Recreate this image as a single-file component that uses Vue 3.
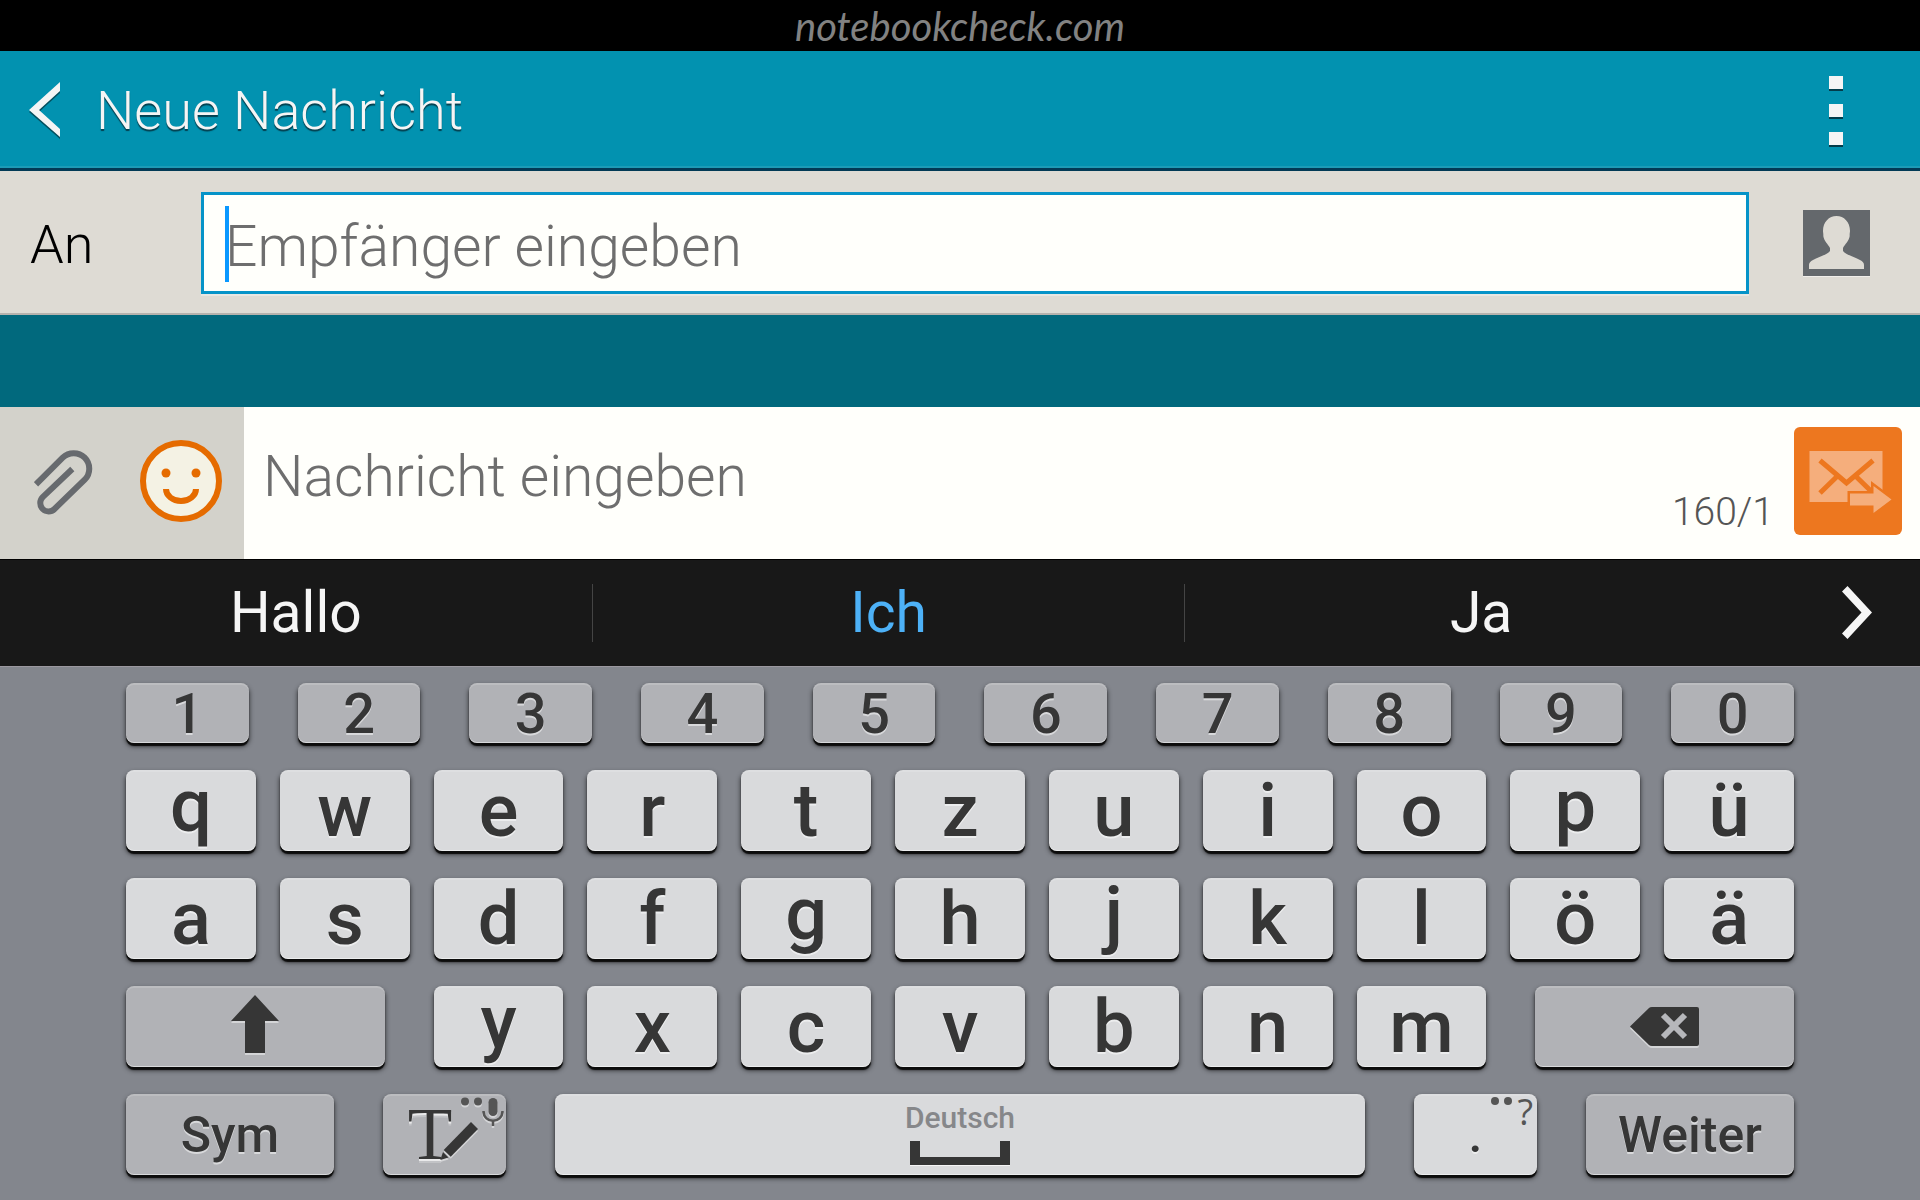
<template>
  <div class="screen">
    <div class="brand-bar">notebookcheck.com</div>

    <header class="title-bar">
      <button type="button" class="plain-btn" aria-label="Zurück">
        <svg class="back-icon" width="31" height="58" viewBox="0 0 31 58">
          <path d="M0 28 31 0v9L10 28l21 19v8z" fill="#f5f5f5" />
        </svg>
      </button>
      <h1>Neue Nachricht</h1>
      <button type="button" class="plain-btn menu-btn" aria-label="Menü">
        <span class="dot"></span>
        <span class="dot"></span>
        <span class="dot"></span>
      </button>
    </header>

    <div class="recipient-row">
      <label for="recipient">An</label>
      <div class="recipient-field">
        <span class="caret"></span>
        <input id="recipient" v-model="recipient" type="text" placeholder="Empfänger eingeben" />
      </div>
      <button type="button" class="plain-btn contact-btn" aria-label="Kontakte">
        <svg width="67" height="67" viewBox="0 0 67 67">
          <rect y="1" width="67" height="66" fill="#f0eeea" />
          <rect width="67" height="66" fill="#64686c" />
          <path
            d="M33.500 6C41 6 47 12 47 21c0 1-.5 3-.3 5C46 31 42 34 40 38v3c3 4 12 6 17 9q4 2 4 5v4H6v-4q0-3 4-5c5-3 14-5 17-9v-3c-2-4-6-7-6.700-12c.2-2-.3-4-.3-5C20 12 26 6 33.500 6z"
            fill="#dedbd4"
          />
        </svg>
      </button>
    </div>

    <div class="conversation"></div>

    <div class="compose-row">
      <div class="tools">
        <button type="button" class="plain-btn" aria-label="Anhang">
          <svg width="60" height="68" viewBox="35 40 60 68">
            <path
              d="M37 76.300 63.700 49.700A15.500 15.500 0 0 1 85.700 71.700L55.500 101A8.300 8.300 0 0 1 43.700 89.200L73.300 61"
              fill="none"
              stroke="#676a6e"
              stroke-width="6"
            />
          </svg>
        </button>
        <button type="button" class="plain-btn" aria-label="Emoticons">
          <svg width="84" height="84" viewBox="0 0 84 84">
            <circle cx="42" cy="41" r="38" fill="#f4f2e4" stroke="#e56b00" stroke-width="6" />
            <circle cx="27" cy="33" r="4.500" fill="#e56b00" />
            <circle cx="57" cy="33" r="4.500" fill="#e56b00" />
            <path d="M27 49a15 12 0 0 0 30 0" fill="none" stroke="#e56b00" stroke-width="6" />
          </svg>
        </button>
      </div>
      <textarea v-model="message" rows="1" placeholder="Nachricht eingeben" aria-label="Nachricht"></textarea>
      <span class="counter">160/1</span>
      <button type="button" class="send-btn" aria-label="Senden">
        <svg width="108" height="108" viewBox="0 0 108 108">
          <path d="M15.500 24h73v51h-73z" fill="#f5ae7c" />
          <g fill="none" stroke="#ed771f" stroke-width="5">
            <path d="M26 33.500 52.500 56 79 33.500" />
            <path d="M43.500 49 26 66M61.500 49 79 66" />
          </g>
          <path
            d="M56 66.500h23.500V59l18 13.500-18 13.500v-7.500H56z"
            fill="#f5ae7c"
            stroke="#ed771f"
            stroke-width="5"
            paint-order="stroke"
          />
        </svg>
      </button>
    </div>

    <div class="suggestions">
      <button
        v-for="word in suggestions"
        :key="word"
        type="button"
        class="suggestion"
        :class="{ active: word === activeWord }"
      >
        {{ word }}
      </button>
      <button type="button" class="more-btn" aria-label="Mehr">
        <svg width="31" height="54" viewBox="0 0 31 54">
          <path d="M0 5.500 5.500 0 30 26.500 5.500 53 0 47.500l19.500-21z" fill="#f5f5f5" />
        </svg>
      </button>
    </div>

    <div class="keyboard">
      <div class="key-row digits">
        <button v-for="n in digits" :key="n" type="button" class="key dark digit">{{ n }}</button>
      </div>

      <div v-for="(row, i) in letterRows" :key="i" class="key-row letters">
        <button
          v-for="letter in row"
          :key="letter"
          type="button"
          class="key letter"
          :class="{ descender: hasDescender(letter) }"
        >
          {{ letter }}
        </button>
      </div>

      <div class="key-row shift-row">
        <button type="button" class="key dark side" aria-label="Umschalt">
          <svg class="embossed" width="48" height="63" viewBox="0 0 48 63">
            <path d="M24 0 48 26H34v32H14V26H0z" fill="#363636" />
          </svg>
        </button>
        <div class="key-group">
          <button
            v-for="letter in lastLetters"
            :key="letter"
            type="button"
            class="key letter"
            :class="{ descender: hasDescender(letter) }"
          >
            {{ letter }}
          </button>
        </div>
        <button type="button" class="key dark side" aria-label="Löschen">
          <svg class="embossed" width="69" height="39" viewBox="0 0 69 39">
            <path d="M0 19.500 19 1q1-1 3-1h45q2 0 2 2v35q0 2-2 2H22q-2 0-3-1z" fill="#363636" />
            <path d="m33 8 22 22m0-22-22 22" fill="none" stroke="#b6b7bb" stroke-width="6" />
          </svg>
        </button>
      </div>

      <div class="key-row bottom-row">
        <button type="button" class="key dark word">Sym</button>
        <button type="button" class="key dark" aria-label="Eingabemodus">
          <svg class="embossed" width="122" height="81" viewBox="0 0 122 81">
            <text x="46" y="65" class="serif-t">T</text>
            <path d="m87 28 7 7-27.300 27.700-7-6.700z" fill="#363636" />
            <path d="m59 58 5.500 5.500-8.200 2.500z" fill="#363636" />
            <g fill="#555">
              <circle cx="81" cy="7.500" r="4" />
              <circle cx="94" cy="7.500" r="4" />
              <rect x="104.500" y="4" width="9" height="18" rx="4.500" />
            </g>
            <path d="M99.500 17c0 13 19 13 19 0M109 26.500V32" fill="none" stroke="#555" stroke-width="2.500" />
          </svg>
        </button>
        <button type="button" class="key space">
          <span class="language">Deutsch</span>
          <span class="space-mark"></span>
        </button>
        <button type="button" class="key word">
          .
          <span class="hint"><i></i><i></i>?</span>
        </button>
        <button type="button" class="key dark word">Weiter</button>
      </div>
    </div>
  </div>
</template>

<script setup>
import { ref } from 'vue';

const recipient = ref('');
const message = ref('');

const suggestions = ['Hallo', 'Ich', 'Ja'];
const activeWord = 'Ich';

const digits = [...'1234567890'];
const letterRows = [[...'qwertzuiopü'], [...'asdfghjklöä']];
const lastLetters = [...'yxcvbnm'];

// letters with a descender sit a little higher on their key
const hasDescender = (letter) => 'qypgj'.includes(letter);
</script>

<style>
body {
  margin: 0;
  background: #83868d;
}
</style>

<style scoped>
.screen {
  display: flex;
  flex-direction: column;
  min-height: 100vh;
  font-family: Roboto, 'Liberation Sans', sans-serif;
  color: #363636;
}
.screen *,
.screen {
  box-sizing: border-box;
}
button,
input,
textarea {
  font-family: inherit;
  border: none;
  outline: none;
  margin: 0;
  padding: 0;
}
button {
  cursor: pointer;
}
svg {
  display: block;
}
.plain-btn {
  background: none;
}

/* top */
.brand-bar {
  height: 51px;
  background: #000;
  color: #828282;
  font-family: 'Segoe Script', Lato, sans-serif;
  font-style: italic;
  font-size: 40px;
  line-height: 52px;
  text-align: center;
}
.title-bar {
  display: flex;
  align-items: center;
  height: 120px;
  padding: 2px 77px 0 29px;
  background: #0292b0;
  border-bottom: 3px solid #023a55;
  box-shadow: inset 0 -2px #1c9bb6;
}
.back-icon {
  filter: drop-shadow(0 2px 0 #04505f);
}
h1 {
  flex: 1;
  margin: 0 0 0 36px;
  font-size: 54px;
  line-height: 64px;
  font-weight: 340;
  color: #f5f5f5;
  text-shadow: 0 2px 1px #04404f;
}
.menu-btn {
  display: flex;
  flex-direction: column;
  gap: 15px;
}
.dot {
  width: 14px;
  height: 13px;
  background: #f5f5f5;
  box-shadow: 0 2px #033c4a;
}

/* recipient */
.recipient-row {
  display: flex;
  align-items: center;
  height: 144px;
  padding: 2px 50px 0 30px;
  background: #dedbd4;
  border-bottom: 2px solid #b5b2ad;
}
.recipient-row label {
  width: 171px;
  padding-top: 4px;
  font-size: 54px;
  line-height: 64px;
  font-weight: 340;
  color: #000;
}
.recipient-field {
  display: flex;
  flex: 1;
  align-items: center;
  height: 102px;
  padding: 2px 0 0 21px;
  background: #fffffb;
  border: 3px solid #0593c8;
  box-shadow: 0 2px #e8e7e3;
}
.caret {
  width: 4px;
  height: 76px;
  margin-right: -4px;
  background: #0a98ff;
}
.recipient-field input {
  flex: 1;
  min-width: 0;
  padding-top: 6px;
  background: none;
  caret-color: #0a98ff;
}
input,
textarea {
  font-size: 57px;
  line-height: 68px;
  font-weight: 340;
  color: #000;
}
input::placeholder,
textarea::placeholder {
  color: #6e6e6e;
  opacity: 1;
}
.contact-btn {
  margin-left: 54px;
}

.conversation {
  height: 92px;
  background: #01697d;
}

/* compose */
.compose-row {
  display: flex;
  height: 152px;
  background: #fffffb;
}
.tools {
  display: flex;
  align-items: center;
  gap: 45px;
  width: 244px;
  padding: 0 0 2px 34px;
  background: #d3d2cb;
}
textarea {
  flex: 1;
  min-width: 0;
  padding: 36px 0 0 19px;
  background: none;
  resize: none;
  overflow: hidden;
}
.counter {
  align-self: flex-end;
  margin: 0 20px 25px 0;
  font-size: 39px;
  line-height: 44px;
  font-weight: 340;
  color: #555;
}
.send-btn {
  align-self: center;
  width: 108px;
  height: 108px;
  margin: 0 18px 4px 0;
  border-radius: 6px;
  background: #ed771f;
}

/* suggestions */
.suggestions {
  display: grid;
  grid-template-columns: repeat(3, 1fr) 142px;
  align-items: center;
  height: 107px;
  background: #181818;
  border-top: 1px solid #000;
}
.suggestion {
  height: 58px;
  background: none;
  border-right: 1px solid #444;
  color: #f5f5f5;
  font-size: 57px;
  line-height: 58px;
}
.suggestion:nth-child(3) {
  border-right-color: transparent;
}
.suggestion.active {
  color: #4db1f7;
}
.more-btn {
  padding-left: 64px;
  background: none;
}

/* keyboard */
.keyboard {
  display: flex;
  flex: 1;
  flex-direction: column;
  gap: 27px;
  padding: 16px 126px 25px;
  background: #83868d;
  border-top: 1px solid #9b989f;
}
.key-row {
  display: grid;
  grid-template-rows: 100%;
  height: 81px;
}
.digits {
  grid-template-columns: repeat(10, 1fr);
  gap: 49px;
  height: 60px;
}
.letters {
  grid-template-columns: repeat(11, 1fr);
  gap: 24px;
}
.shift-row {
  grid-template-columns: 259fr 1054fr 259fr;
  gap: 49px;
}
.key-group {
  display: grid;
  grid-template-rows: 100%;
  grid-template-columns: repeat(7, 1fr);
  gap: 24px;
}
.bottom-row {
  grid-template-columns: 208px 123px 1fr 123px 208px;
  gap: 49px;
}
.key {
  position: relative;
  display: flex;
  align-items: center;
  justify-content: center;
  min-width: 0;
  border-radius: 8px;
  background: #d9dadc;
  color: #363636;
  font-weight: 500;
  text-shadow: 0 2px rgba(255, 255, 255, 0.5);
  box-shadow:
    inset 0 2px rgba(255, 255, 255, 0.15),
    inset 0 -1px rgba(255, 255, 255, 0.5),
    0 3px 1px #0c0c0c,
    0 3px 4px 1px rgba(0, 0, 0, 0.5);
}
.dark {
  background: #b1b2b6;
}
.digit {
  padding-top: 2px;
  font-size: 56px;
  line-height: 56px;
}
.letter {
  font-size: 74px;
  line-height: 70px;
}
.descender {
  padding-bottom: 10px;
}
.word {
  font-size: 50px;
  line-height: 58px;
}
.embossed {
  filter: drop-shadow(0 2px 0 rgba(255, 255, 255, 0.45));
}
.serif-t {
  font-family: 'Liberation Serif', serif;
  font-size: 73px;
  font-weight: 400;
  text-anchor: middle;
  fill: #363636;
}
.space {
  flex-direction: column;
  gap: 7px;
  padding-bottom: 2px;
}
.language {
  font-size: 30px;
  line-height: 32px;
  color: #86878a;
  text-shadow: none;
}
.space-mark {
  width: 100px;
  height: 24px;
  border: solid #363636;
  border-width: 0 10px 8px;
  box-shadow: 0 1px #f5f5f5;
}
/* long-press hint in the corner of the key */
.hint {
  position: absolute;
  top: 3px;
  right: 4px;
  display: flex;
  gap: 5px;
  font-family: 'Open Sans', sans-serif;
  font-size: 36px;
  font-weight: 400;
  line-height: 30px;
  color: #555;
  text-shadow: none;
}
.hint i {
  width: 8px;
  height: 8px;
  border-radius: 50%;
  background: #555;
}
</style>
